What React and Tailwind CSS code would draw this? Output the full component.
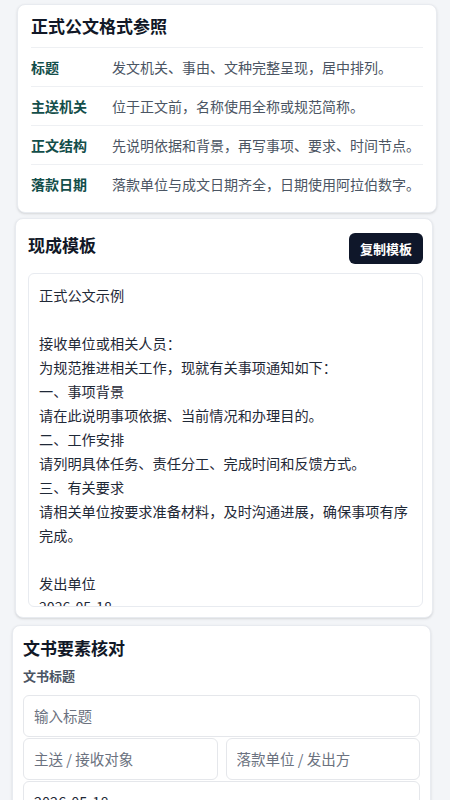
import { useState } from 'react';

const rules = [
  { label: '标题', text: '发文机关、事由、文种完整呈现，居中排列。' },
  { label: '主送机关', text: '位于正文前，名称使用全称或规范简称。' },
  { label: '正文结构', text: '先说明依据和背景，再写事项、要求、时间节点。' },
  { label: '落款日期', text: '落款单位与成文日期齐全，日期使用阿拉伯数字。' },
];

const template = `正式公文示例

接收单位或相关人员：
为规范推进相关工作，现就有关事项通知如下：
一、事项背景
请在此说明事项依据、当前情况和办理目的。
二、工作安排
请列明具体任务、责任分工、完成时间和反馈方式。
三、有关要求
请相关单位按要求准备材料，及时沟通进展，确保事项有序完成。

发出单位
2026-05-18`;

const inputCls = 'h-[42px] w-full border border-[#e5e7eb] rounded-md px-[10px] text-[14.5px] placeholder-[#6b7280] outline-none';

export default function App() {
  const [copied, setCopied] = useState(false);

  return (
    <div className="min-h-screen bg-[#f3f5f8] pt-[4px] pb-4 flex flex-col gap-[5px] font-['Noto_Sans_CJK_SC','Noto_Sans',sans-serif]">
      {/* Format reference */}
      <section className="ml-[17px] mr-[13px] bg-white border border-[#e8ebf0] rounded-lg shadow-sm px-[13px] pt-[9px] pb-[9px]">
        <h2 className="text-[17px] font-bold text-[#111827] leading-6 pb-[9px]">正式公文格式参照</h2>
        {rules.map(r => (
          <div key={r.label} className="flex items-center border-t border-[#eef0f3] py-[9px]">
            <div className="w-[81px] shrink-0 text-sm font-bold text-[#134e4a] leading-5">{r.label}</div>
            <div className="text-sm text-[#4b5563] leading-5">{r.text}</div>
          </div>
        ))}
      </section>

      {/* Ready-made template */}
      <section className="ml-[15px] mr-[17px] bg-white border border-[#e8ebf0] rounded-lg shadow-sm pl-3 pr-[9px] pt-[14px] pb-[10px]">
        <div className="flex items-start justify-between mb-[9px]">
          <h2 className="text-[17px] font-bold text-[#111827] leading-6">现成模板</h2>
          <button
            onClick={() => setCopied(true)}
            className="bg-[#0f172a] text-white text-[13px] font-bold rounded-md h-[31px] px-[11px]"
          >
            {copied ? '已复制' : '复制模板'}
          </button>
        </div>
        <div className="border border-[#e8ebf0] rounded-md h-[334px] overflow-hidden px-[10px] pt-[9px]">
          <div className="whitespace-pre-wrap text-[14.2px] leading-6 text-[#1f2937]">{template}</div>
        </div>
      </section>

      {/* Element check */}
      <section className="mt-[2px] ml-[12px] mr-[19px] bg-white border border-[#e8ebf0] rounded-lg shadow-sm px-[10px] pt-[10px] pb-3">
        <h2 className="text-[17px] font-bold text-[#111827] leading-6">文书要素核对</h2>
        <label className="block text-[13px] font-bold text-[#4b5563] mt-[6px] mb-[9px]">文书标题</label>
        <div className="flex flex-col gap-[1px]">
          <input placeholder="输入标题" className={inputCls} />
          <div className="grid grid-cols-2 gap-2">
            <input placeholder="主送 / 接收对象" className={inputCls} />
            <input placeholder="落款单位 / 发出方" className={inputCls} />
          </div>
          <input defaultValue="2026-05-18" className={inputCls + ' text-[#1f2937]'} />
        </div>
      </section>
    </div>
  );
}
